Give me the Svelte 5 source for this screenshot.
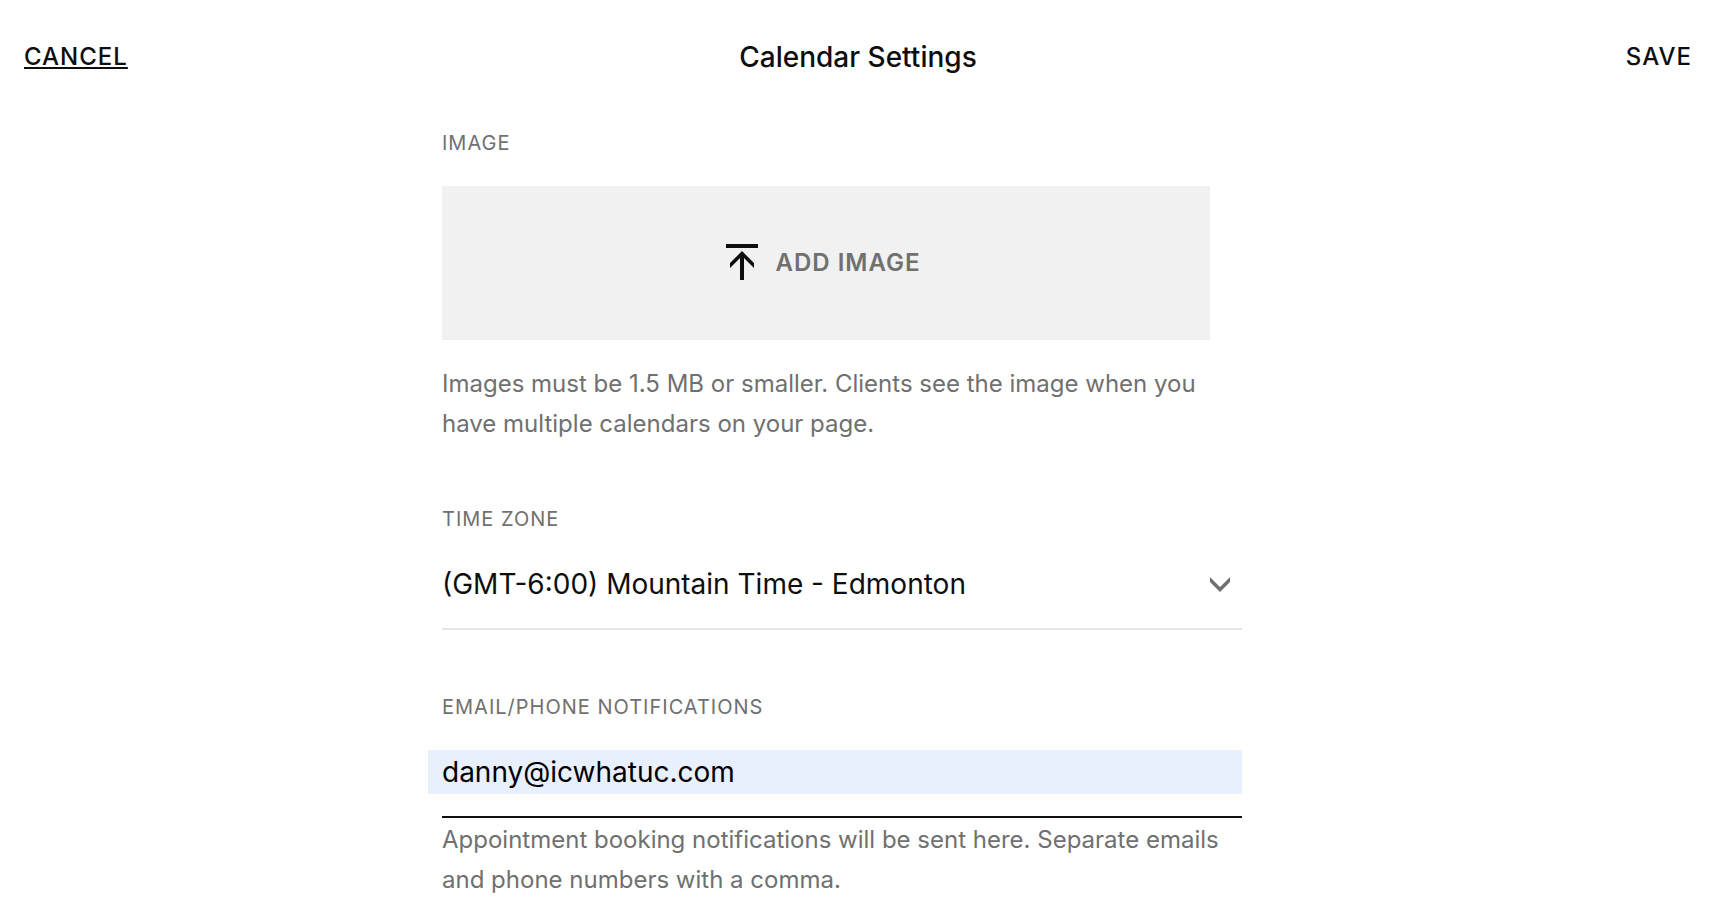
<script>
  let timeZone = "America/Edmonton";
  let notifications = "danny@icwhatuc.com";

  const timeZones = [
    { value: "America/Edmonton", label: "(GMT-6:00) Mountain Time - Edmonton" },
  ];
</script>

<div class="page">
  <header>
    <button type="button" class="action cancel">CANCEL</button>
    <h1>Calendar Settings</h1>
    <button type="submit" form="settings" class="action save">SAVE</button>
  </header>

  <form id="settings" on:submit|preventDefault>
    <section class="image-field">
      <span class="label" id="image-label">IMAGE</span>
      <button type="button" class="upload" aria-describedby="image-label image-help">
        <svg width="32" height="36" viewBox="0 0 32 36" aria-hidden="true">
          <path d="M0 0H32V4H0ZM16 7L28 19V24L18 14V36H14V14L4 24V19Z" />
        </svg>
        <span>ADD IMAGE</span>
      </button>
      <p class="help" id="image-help">
        Images must be 1.5 MB or smaller. Clients see the image when you have
        multiple calendars on your page.
      </p>
    </section>

    <section>
      <label class="label" for="time-zone">TIME ZONE</label>
      <div class="control select">
        <select id="time-zone" bind:value={timeZone}>
          {#each timeZones as zone}
            <option value={zone.value}>{zone.label}</option>
          {/each}
        </select>
        <svg width="20" height="15" viewBox="0 0 20 15" aria-hidden="true">
          <path d="M0 0L10 10L20 0V5L10 15L0 5Z" />
        </svg>
      </div>
    </section>

    <section>
      <label class="label" for="notifications">EMAIL/PHONE NOTIFICATIONS</label>
      <div class="control focused">
        <input
          id="notifications"
          type="text"
          aria-describedby="notifications-help"
          bind:value={notifications}
        />
      </div>
      <p class="help tight" id="notifications-help">
        Appointment booking notifications will be sent here. Separate emails
        and phone numbers with a comma.
      </p>
    </section>
  </form>
</div>

<style>
  :global(body) {
    background: #fff;
  }
  .page {
    font-family: Inter, "Liberation Sans", sans-serif;
    color: #0e0e0e;
  }
  header {
    display: grid;
    grid-template-columns: 1fr auto 1fr;
    align-items: center;
    height: 114px;
    padding: 0 36px 0 24px;
  }
  h1 {
    margin: 0;
    font-size: 28px;
    font-weight: 500;
    line-height: 40px;
  }
  button,
  select,
  input {
    box-sizing: border-box;
    margin: 0;
    padding: 0;
    border: 0;
    border-radius: 0;
    background: none;
    color: inherit;
    font-family: inherit;
  }
  button {
    font-size: 24px;
    font-weight: 500;
    letter-spacing: 1px;
    cursor: pointer;
  }
  .action {
    line-height: 24px;
  }
  .cancel {
    justify-self: start;
    text-decoration: underline;
    text-decoration-thickness: 2px;
    text-underline-offset: 2px;
  }
  .save {
    justify-self: end;
  }
  form {
    box-sizing: border-box;
    max-width: 844px;
    margin: 0 auto;
    padding: 17px 44px 0 0;
  }
  section {
    margin-bottom: 65px;
  }
  section:last-child {
    margin-bottom: 0;
  }
  .image-field {
    margin-bottom: 63px;
  }
  .label {
    display: block;
    margin-bottom: 31px;
    color: #707070;
    font-size: 20px;
    line-height: 24px;
    letter-spacing: 1px;
  }
  .upload {
    display: flex;
    align-items: center;
    justify-content: center;
    gap: 18px;
    width: 96%;
    height: 154px;
    padding: 0 6px 2px 0;
    background: #f1f1f1;
    color: #707070;
    font-weight: 600;
  }
  .upload svg {
    fill: #0e0e0e;
  }
  .help {
    margin: 24px 0 0;
    color: #707070;
    font-size: 24px;
    line-height: 40px;
  }
  .tight {
    margin-top: 2px;
  }
  .control {
    padding-bottom: 22px;
    border-bottom: 2px solid #e6e6e6;
  }
  .focused {
    display: flex;
    border-color: #0e0e0e;
  }
  .select {
    display: grid;
    align-items: center;
  }
  .select > * {
    grid-area: 1 / 1;
  }
  .select svg {
    justify-self: end;
    margin-right: 12px;
    fill: #707070;
    pointer-events: none;
  }
  select,
  input {
    height: 44px;
    font-size: 28px;
    outline: none;
  }
  select {
    width: 100%;
    appearance: none;
  }
  input {
    flex: 1;
    margin-left: -14px;
    padding-left: 14px;
    background: #e8effd;
    color: #000;
  }
</style>
